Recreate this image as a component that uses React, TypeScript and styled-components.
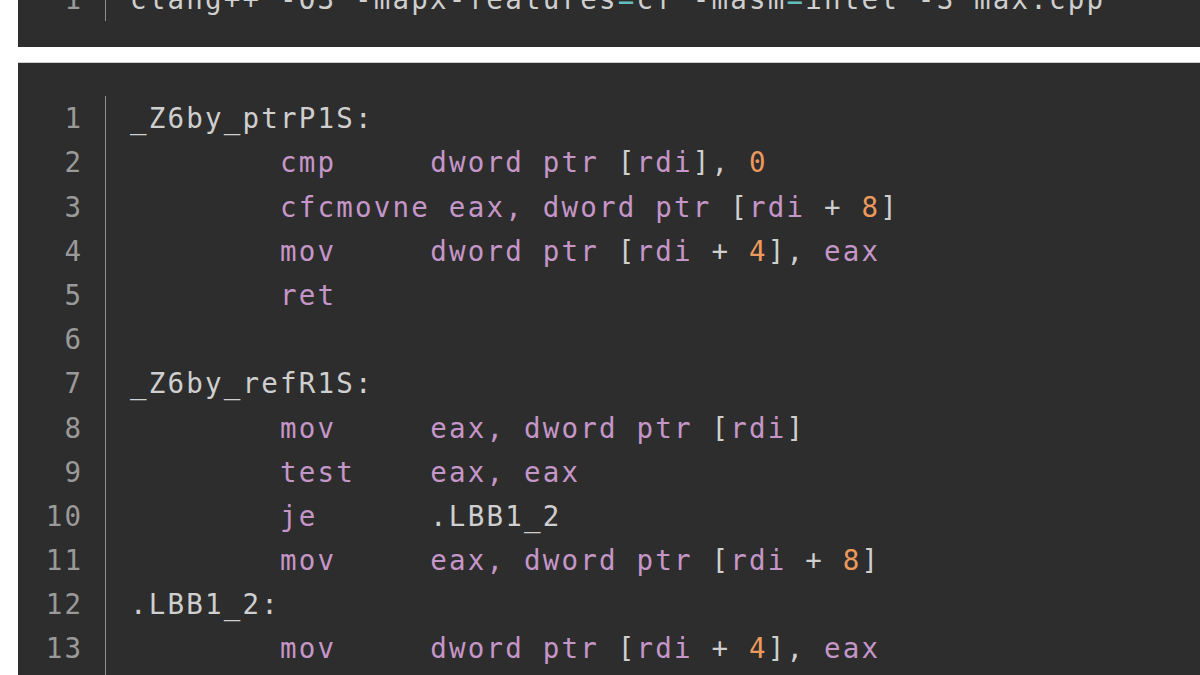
import React from "react";
import styled, { createGlobalStyle } from "styled-components";

const Global = createGlobalStyle`
  html, body { margin: 0; padding: 0; background: #ffffff; overflow: hidden; }
  body { font-family: "DejaVu Sans Mono", "Liberation Mono", monospace; }
`;

const Page = styled.div`
  display: flex;
  flex-direction: column;
  gap: 15px;
  padding-left: 18px;
`;

const Panel = styled.div<{ $top?: boolean }>`
  display: grid;
  grid-template-columns: 88px 1fr;
  background: #2d2d2d;
  margin-top: ${(p) => (p.$top ? "-56px" : "0")};
  padding: 33px 0 ${(p) => (p.$top ? "26px" : "40px")};
  border-top: ${(p) => (p.$top ? "none" : "1px solid #cfcfcf")};
`;

const Gutter = styled.div`
  display: flex;
  flex-direction: column;
  align-items: flex-end;
  padding-right: 24px;
  border-right: 1px solid #8e8e8e;
`;

const Num = styled.div`
  font-family: "DejaVu Sans Mono", monospace;
  font-size: 27.5px;
  line-height: 44.2px;
  height: 44.2px;
  color: #9a9a9a;
  letter-spacing: 2.2px;
  margin-right: -2.2px;
`;

const Code = styled.div`
  display: flex;
  flex-direction: column;
  padding-left: 24px;
`;

const Line = styled.div`
  font-family: "DejaVu Sans Mono", monospace;
  font-size: 27.5px;
  line-height: 44.2px;
  height: 44.2px;
  letter-spacing: 2.2px;
  white-space: pre;
  color: #cfcfcf;
`;

type Kind = "p" | "k" | "n" | "o";

const colors: Record<Kind, string> = {
  p: "#cfcfcf",
  k: "#c596c8",
  n: "#ec9a5c",
  o: "#63bdbd",
};

const Tok = styled.span<{ $k: Kind }>`
  color: ${(p) => colors[p.$k]};
`;

type Seg = [Kind, string];

const I = "        ";

const asm: Seg[][] = [
  [["p", "_Z6by_ptrP1S:"]],
  [["p", I], ["k", "cmp"], ["p", "     "], ["k", "dword ptr "], ["p", "["], ["k", "rdi"], ["p", "], "], ["n", "0"]],
  [["p", I], ["k", "cfcmovne eax, dword ptr "], ["p", "["], ["k", "rdi"], ["p", " + "], ["n", "8"], ["p", "]"]],
  [["p", I], ["k", "mov"], ["p", "     "], ["k", "dword ptr "], ["p", "["], ["k", "rdi"], ["p", " + "], ["n", "4"], ["p", "], "], ["k", "eax"]],
  [["p", I], ["k", "ret"]],
  [],
  [["p", "_Z6by_refR1S:"]],
  [["p", I], ["k", "mov"], ["p", "     "], ["k", "eax, dword ptr "], ["p", "["], ["k", "rdi"], ["p", "]"]],
  [["p", I], ["k", "test"], ["p", "    "], ["k", "eax, eax"]],
  [["p", I], ["k", "je"], ["p", "      .LBB1_2"]],
  [["p", I], ["k", "mov"], ["p", "     "], ["k", "eax, dword ptr "], ["p", "["], ["k", "rdi"], ["p", " + "], ["n", "8"], ["p", "]"]],
  [["p", ".LBB1_2:"]],
  [["p", I], ["k", "mov"], ["p", "     "], ["k", "dword ptr "], ["p", "["], ["k", "rdi"], ["p", " + "], ["n", "4"], ["p", "], "], ["k", "eax"]],
  [["p", I], ["k", "ret"]],
];

const cmd: Seg[][] = [
  [
    ["p", "clang++ -O3 -mapx-features"],
    ["o", "="],
    ["p", "cf -masm"],
    ["o", "="],
    ["p", "intel -S max.cpp"],
  ],
];

function Block({ lines, top }: { lines: Seg[][]; top?: boolean }) {
  return (
    <Panel $top={top}>
      <Gutter>
        {lines.map((_, i) => (
          <Num key={i}>{i + 1}</Num>
        ))}
      </Gutter>
      <Code>
        {lines.map((segs, i) => (
          <Line key={i}>
            {segs.map(([k, t], j) => (
              <Tok key={j} $k={k}>
                {t}
              </Tok>
            ))}
          </Line>
        ))}
      </Code>
    </Panel>
  );
}

export default function App() {
  return (
    <>
      <Global />
      <Page>
        <Block lines={cmd} top />
        <Block lines={asm} />
      </Page>
    </>
  );
}
